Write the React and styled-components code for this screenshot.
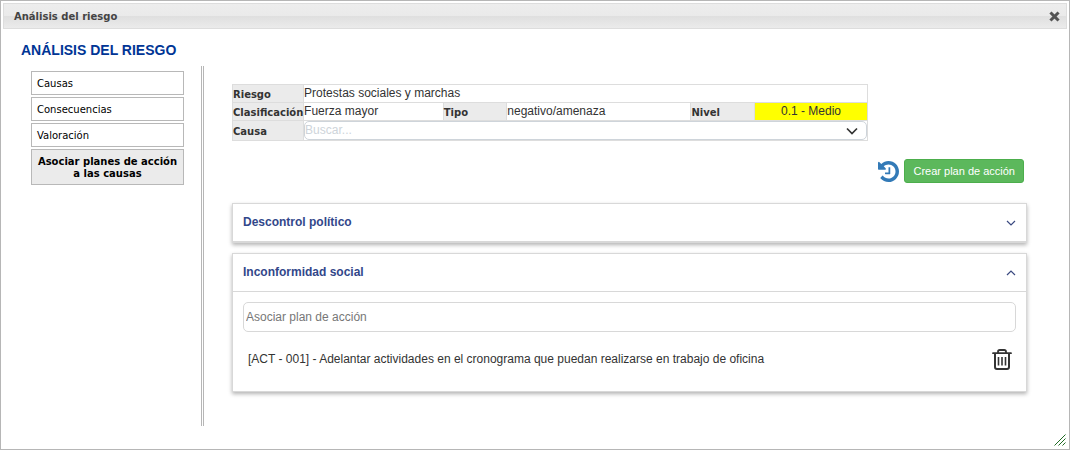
import React, { useState } from "react";
import styled, { createGlobalStyle } from "styled-components";

const ITEMS = ["Causas", "Consecuencias", "Valoración", "Asociar planes de acción a las causas"];

function App() {
    const [active, setActive] = useState(3);
    const [open, setOpen] = useState({ politico: false, social: true });
    const toggle = (key) => setOpen({ ...open, [key]: !open[key] });

    return (
        <>
            <GlobalStyle />
            <Dialog>
                <TitleBar>
                    <span>Análisis del riesgo</span>
                    <CloseButton type="button" aria-label="Cerrar">
                        <svg width="11" height="11" viewBox="0 0 11 11">
                            <path d="M2.5 2.5L8.5 8.5M8.5 2.5L2.5 8.5" stroke="#555" strokeWidth="3" strokeLinecap="square" />
                        </svg>
                    </CloseButton>
                </TitleBar>
                <Heading>ANÁLISIS DEL RIESGO</Heading>
                <Body>
                    <Menu>
                        {ITEMS.map((item, i) => (
                            <MenuButton key={item} type="button" $active={i === active} onClick={() => setActive(i)}>
                                {item}
                            </MenuButton>
                        ))}
                    </Menu>
                    <Main>
                        <InfoTable>
                            <colgroup>
                                <Col $width="11.2%" />
                                <Col $width="22%" />
                                <Col $width="10%" />
                                <Col $width="29%" />
                                <Col $width="10%" />
                                <Col $width="17.8%" />
                            </colgroup>
                            <tbody>
                                <tr>
                                    <Label scope="row">Riesgo</Label>
                                    <Value colSpan={5}>Protestas sociales y marchas</Value>
                                </tr>
                                <tr>
                                    <Label scope="row">Clasificación</Label>
                                    <Value>Fuerza mayor</Value>
                                    <Label scope="row">Tipo</Label>
                                    <Value>negativo/amenaza</Value>
                                    <Label scope="row">Nivel</Label>
                                    <Value $level>0.1 - Medio</Value>
                                </tr>
                                <tr>
                                    <Label scope="row"><label htmlFor="causa">Causa</label></Label>
                                    <Value colSpan={5}>
                                        <SelectBox>
                                            <Select id="causa" defaultValue="">
                                                <option value="">Buscar...</option>
                                                <option>Descontrol político</option>
                                                <option>Inconformidad social</option>
                                            </Select>
                                            <SelectArrow width="12" height="8" viewBox="0 0 12 8">
                                                <path d="M1 1.5L6 6.5L11 1.5" fill="none" stroke="#333" strokeWidth="1.7" />
                                            </SelectArrow>
                                        </SelectBox>
                                    </Value>
                                </tr>
                            </tbody>
                        </InfoTable>
                        <Actions>
                            <IconButton type="button" aria-label="Historial">
                                <HistoryIcon />
                            </IconButton>
                            <CreateButton type="button">Crear plan de acción</CreateButton>
                        </Actions>
                        <Panels>
                            <Panel>
                                <PanelHeader type="button" aria-expanded={open.politico} onClick={() => toggle("politico")}>
                                    Descontrol político
                                    <Chevron open={open.politico} />
                                </PanelHeader>
                            </Panel>
                            <Panel>
                                <PanelHeader type="button" aria-expanded={open.social} onClick={() => toggle("social")}>
                                    Inconformidad social
                                    <Chevron open={open.social} />
                                </PanelHeader>
                                {open.social && (
                                    <PanelBody>
                                        <PlanInput type="text" aria-label="Asociar plan de acción" placeholder="Asociar plan de acción" />
                                        <PlanRow>
                                            <span>[ACT - 001] - Adelantar actividades en el cronograma que puedan realizarse en trabajo de oficina</span>
                                            <IconButton type="button" aria-label="Eliminar">
                                                <TrashIcon />
                                            </IconButton>
                                        </PlanRow>
                                    </PanelBody>
                                )}
                            </Panel>
                        </Panels>
                    </Main>
                </Body>
                <ResizeGrip width="12" height="12" viewBox="0 0 12 12">
                    <path d="M0.5 11.5L11.5 0.5M4.5 11.5L11.5 4.5M8.5 11.5L11.5 8.5" stroke="#1f6b24" strokeWidth="1" />
                </ResizeGrip>
            </Dialog>
        </>
    );
}

function Chevron({ open }) {
    return (
        <svg width="10" height="6" viewBox="0 0 10 6">
            <path d={open ? "M1 5L5 1L9 5" : "M1 1L5 5L9 1"} fill="none" stroke="#3b4a80" strokeWidth="1.2" />
        </svg>
    );
}

function HistoryIcon() {
    return (
        <svg width="21" height="21" viewBox="0 128 1536 1536">
            <path
                fill="#337ab7"
                d="M1536 896q0 156-61 298t-164 245-245 164-298 61q-172 0-327-72.5t-264-204.5q-7-10-6.5-22.5t8.5-20.5l137-138q10-9 25-9 16 2 23 12 73 95 179 147t225 52q104 0 198.5-40.5t163.5-109.5 109.5-163.5 40.5-198.5-40.5-198.5-109.5-163.5-163.5-109.5-198.5-40.5q-98 0-188 35.5t-160 101.5l137 138q31 30 14 69-17 40-59 40h-448q-26 0-45-19t-19-45v-448q0-42 40-59 39-17 69 14l130 129q107-101 244.5-156.5t284.5-55.5q156 0 298 61t245 164 164 245 61 298zm-640-288v448q0 14-9 23t-23 9h-320q-14 0-23-9t-9-23v-64q0-14 9-23t23-9h224v-352q0-14 9-23t23-9h64q14 0 23 9t9 23z"
            />
        </svg>
    );
}

function TrashIcon() {
    return (
        <svg width="20" height="21" viewBox="0 0 20 21" fill="none" stroke="#333">
            <path d="M1 4.2H19" strokeWidth="1.8" strokeLinecap="round" />
            <path d="M6 4V2.8Q6 1 7.8 1H12.2Q14 1 14 2.8V4" strokeWidth="1.8" />
            <path d="M3 5V18Q3 20 5 20H15Q17 20 17 18V5" strokeWidth="2" />
            <path d="M6.5 8V16.5M10 8V16.5M13.5 8V16.5" strokeWidth="1.6" />
        </svg>
    );
}

const GlobalStyle = createGlobalStyle`
    * {
        box-sizing: border-box;
    }

    body {
        margin: 0;
        background: #fff;
        color: #333;
        font: 12px/17px "Liberation Sans", Arial, sans-serif;
    }

    button, input, select {
        font: inherit;
    }
`

const Dialog = styled.div`
    position: relative;
    min-height: calc(100vh - 1px);
    padding: 2px;
    border: 1px solid #b6b6b6;
`

const TitleBar = styled.div`
    display: flex;
    align-items: center;
    justify-content: space-between;
    height: 26px;
    padding: 1px 6px 0 10px;
    border: 1px solid #ddd;
    background: linear-gradient(#ededed 0%, #eaeaea 50%, #dfdfdf 51%, #ebebeb 100%);
    color: #444;
    font: bold 10px/16px Verdana, "DejaVu Sans", sans-serif;
`

const CloseButton = styled.button`
    display: flex;
    padding: 0;
    border: 0;
    background: none;
    cursor: pointer;
`

const Heading = styled.h1`
    margin: 12px 0 7px 18px;
    color: #003595;
    font-size: 14px;
    line-height: 18px;
`

const Body = styled.div`
    display: flex;
`

const Menu = styled.nav`
    display: flex;
    flex-direction: column;
    flex: none;
    gap: 2px;
    width: 201px;
    min-height: 360px;
    padding: 5px 17px 0 28px;
    border-right: 3px double #b6b6b6;
`

const MenuButton = styled.button`
    padding: 6px 5px 4px;
    border: 1px solid #b8b8b8;
    background: ${(props) => (props.$active ? '#ebebeb' : '#fff')};
    color: #000;
    font: ${(props) => (props.$active ? 'bold' : 'normal')} 10px/12px Verdana, "DejaVu Sans", sans-serif;
    text-align: ${(props) => (props.$active ? 'center' : 'left')};
    cursor: pointer;
`

const Main = styled.main`
    flex: 1;
    min-width: 0;
    padding: 18px 40px 33px 28px;
`

const InfoTable = styled.table`
    width: 80%;
    table-layout: fixed;
    border-collapse: collapse;
`

const Col = styled.col`
    width: ${(props) => props.$width};
`

const Label = styled.th`
    padding: 2px 0 0;
    border: 1px solid #ddd;
    background: #ebebeb;
    font: bold 10px/15px Verdana, "DejaVu Sans", sans-serif;
    text-align: left;
    white-space: nowrap;
`

const Value = styled.td`
    padding: 0;
    border: 1px solid #ddd;
    background: ${(props) => (props.$level ? '#ff0' : '#fff')};
    text-align: ${(props) => (props.$level ? 'center' : 'left')};
    white-space: nowrap;
`

const SelectBox = styled.div`
    position: relative;
    display: flex;
`

const Select = styled.select`
    appearance: none;
    width: 100%;
    height: 19px;
    padding: 0 24px 0 0;
    border: 1px solid #ced4da;
    border-radius: 5px;
    background: #fff;
    color: #ced4da;
    line-height: 17px;
`

const SelectArrow = styled.svg`
    position: absolute;
    top: 6px;
    right: 9px;
    pointer-events: none;
`

const Actions = styled.div`
    display: flex;
    align-items: center;
    justify-content: flex-end;
    gap: 5px;
    margin: 18px 3px 20px 0;
`

const IconButton = styled.button`
    display: flex;
    flex: none;
    padding: 0;
    border: 0;
    background: none;
    cursor: pointer;
`

const CreateButton = styled.button`
    height: 24px;
    padding: 0 8px;
    border: 1px solid #4cae4c;
    border-radius: 3px;
    background: #5cb85c;
    color: #fff;
    font-size: 11px;
    cursor: pointer;
`

const Panels = styled.div`
    display: flex;
    flex-direction: column;
    gap: 10px;
`

const Panel = styled.section`
    border: 1px solid #d8d8d8;
    background: #fff;
    box-shadow: 0 2px 4px rgba(0, 0, 0, 0.3);
`

const PanelHeader = styled.button`
    display: flex;
    align-items: center;
    justify-content: space-between;
    width: 100%;
    height: 38px;
    padding: 0 10px;
    border: 0;
    border-bottom: 1px solid #d8d8d8;
    background: #fff;
    color: #32478a;
    font-weight: bold;
    cursor: pointer;
`

const PanelBody = styled.div`
    padding: 10px 10px 21px;
`

const PlanInput = styled.input`
    display: block;
    width: 100%;
    height: 30px;
    padding: 0 2px;
    border: 1px solid #d8d8d8;
    border-radius: 5px;

    &::placeholder {
        color: #777;
        opacity: 1;
    }
`

const PlanRow = styled.div`
    display: flex;
    align-items: center;
    justify-content: space-between;
    gap: 12px;
    padding: 17px 4px 0 5px;
`

const ResizeGrip = styled.svg`
    position: absolute;
    right: 3px;
    bottom: 3px;
`

export default App;
